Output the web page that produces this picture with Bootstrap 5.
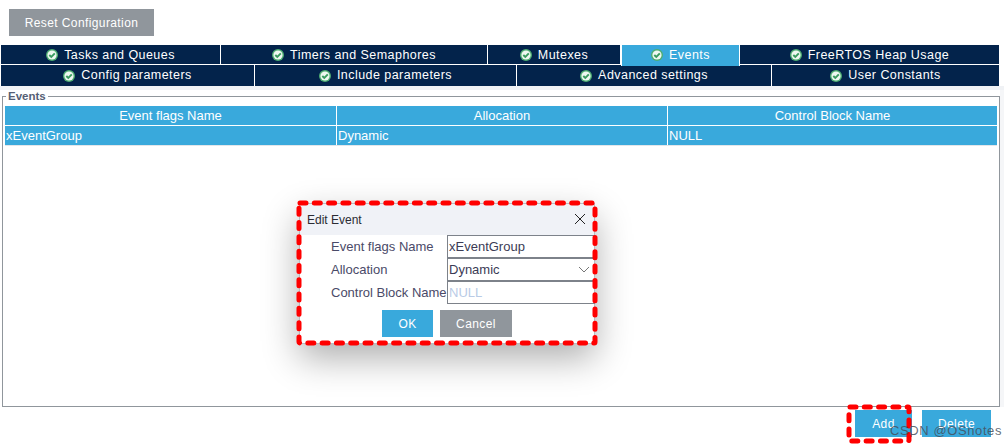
<!DOCTYPE html>
<html lang="en">
<head>
<meta charset="utf-8">
<title>Events</title>
<link href="https://cdn.jsdelivr.net/npm/bootstrap@5.3.0/dist/css/bootstrap.min.css" rel="stylesheet">
<style>
html,body{margin:0;background:#fff;}
body{width:1004px;height:445px;overflow:hidden;position:relative;font-family:"Liberation Sans",Arial,sans-serif;font-size:13px;color:#3b3b55;}
.top-zone{padding:9px 0 0 9px;height:45px;}
.flat-btn{border:0;border-radius:0;color:#fff;font-size:12px;letter-spacing:.4px;padding:0;display:flex;align-items:center;justify-content:center;}
.btn-grey{background:#90969c;}
.btn-blue{background:#39a9dc;}
.reset-btn{width:145px;height:27px;}
.tab-strip{margin-left:1px;width:998px;display:flex;}
.strip-one{height:20px;}
.strip-two{height:21px;}
.tab-cell{background:#03234b;color:#fff;font-size:12.5px;letter-spacing:.45px;display:flex;align-items:center;justify-content:center;gap:6px;border-right:1px solid #fff;white-space:nowrap;}
.tab-cell:last-child{border-right:0;}
.strip-one .tab-cell{height:19px;padding-top:1px;}
.strip-one .tab-cell.tab-on{background:#39a9dc;height:21px;position:relative;z-index:1;padding-bottom:2px;border-left:1px solid #fff;}
.band{height:4px;background:#f0f2f5;}
.frame-wrap{height:317px;padding:6px 0 0 2px;position:relative;border-right:4px solid #f5f6f8;}
.frame-box{border:1px solid #90969c;height:311px;padding:9px 2px 0 2px;}
.frame-title{position:absolute;left:6px;top:0;background:#fff;padding:0 2px;font-size:11.5px;font-weight:700;line-height:12px;color:#565f75;}
.grid-row{display:flex;gap:1px;}
.grid-cell{background:#39a9dc;color:#fff;height:19px;line-height:19px;font-size:13px;padding:0 1px;}
.head-row .grid-cell{text-align:center;}
.data-row{margin-top:1px;border-bottom:1px solid #e3e6ea;}
.foot-row{display:flex;justify-content:flex-end;gap:10px;padding:3px 13px 0 0;}
.foot-btn{height:27px;}
.add-btn{width:57px;}
.del-btn{width:69px;}
.dialog{position:absolute;left:299px;top:203px;width:296px;height:141px;background:#fff;border:1px solid #b9bcc2;box-shadow:0 14px 34px rgba(0,0,0,.32);}
.dialog-head{height:31px;background:#f0f2f7;display:flex;align-items:center;justify-content:space-between;padding:0 8px 0 7px;font-size:12px;color:#2b2b33;}
.dialog-close{margin-bottom:2px;}
.dialog-form{display:grid;grid-template-columns:147px 148px;row-gap:0;}
.dialog-label{height:23px;line-height:23px;text-align:left;padding-left:31px;white-space:nowrap;font-size:13px;color:#4a4a68;}
.dialog-field{height:23px;border:1px solid #7d828a;border-right:0;line-height:21px;padding:0 1px;font-size:13px;color:#3b3b55;display:flex;justify-content:space-between;align-items:center;}
.ghost{color:#b9cbe6;}
.dialog-actions{display:flex;justify-content:center;gap:7px;margin-top:6px;}
.act-ok{width:51px;height:27px;}
.act-cancel{width:72px;height:27px;}
.mark-line{position:absolute;overflow:visible;pointer-events:none;z-index:5;}
.watermark{position:absolute;left:890px;top:421px;font-size:13px;color:rgba(70,80,92,.85);letter-spacing:.6px;z-index:6;white-space:nowrap;}
</style>
</head>
<body>
<svg width="0" height="0" class="position-absolute"><defs>
<g id="okmark"><circle cx="6" cy="6" r="6" fill="#4fae73"/><circle cx="6" cy="6" r="4.6" fill="#eef8f1"/><path d="M3.3 6 5.3 8 8.8 4.3" fill="none" stroke="#3a9c60" stroke-width="1.9"/></g>
</defs></svg>

<div class="top-zone"><button class="flat-btn btn-grey reset-btn">Reset Configuration</button></div>

<div class="tab-strip strip-one">
  <div class="tab-cell" style="width:220px"><svg width="12" height="12"><use href="#okmark"/></svg>Tasks and Queues</div>
  <div class="tab-cell" style="width:267px"><svg width="12" height="12"><use href="#okmark"/></svg>Timers and Semaphores</div>
  <div class="tab-cell" style="width:133px"><svg width="12" height="12"><use href="#okmark"/></svg>Mutexes</div>
  <div class="tab-cell tab-on" style="width:119px"><svg width="12" height="12"><use href="#okmark"/></svg>Events</div>
  <div class="tab-cell" style="width:259px"><svg width="12" height="12"><use href="#okmark"/></svg>FreeRTOS Heap Usage</div>
</div>
<div class="tab-strip strip-two">
  <div class="tab-cell" style="width:254px"><svg width="12" height="12"><use href="#okmark"/></svg>Config parameters</div>
  <div class="tab-cell" style="width:262px"><svg width="12" height="12"><use href="#okmark"/></svg>Include parameters</div>
  <div class="tab-cell" style="width:255px"><svg width="12" height="12"><use href="#okmark"/></svg>Advanced settings</div>
  <div class="tab-cell" style="width:227px"><svg width="12" height="12"><use href="#okmark"/></svg>User Constants</div>
</div>
<div class="band"></div>

<div class="frame-wrap">
  <div class="frame-title">Events</div>
  <div class="frame-box">
    <div class="grid-row head-row">
      <div class="grid-cell" style="width:331px">Event flags Name</div>
      <div class="grid-cell" style="width:330px">Allocation</div>
      <div class="grid-cell" style="width:329px">Control Block Name</div>
    </div>
    <div class="grid-row data-row">
      <div class="grid-cell" style="width:331px">xEventGroup</div>
      <div class="grid-cell" style="width:330px">Dynamic</div>
      <div class="grid-cell" style="width:329px">NULL</div>
    </div>
  </div>
</div>
<div class="foot-row">
  <button class="flat-btn btn-blue foot-btn add-btn">Add</button>
  <button class="flat-btn btn-blue foot-btn del-btn">Delete</button>
</div>

<div class="dialog">
  <div class="dialog-head"><span>Edit Event</span>
    <svg class="dialog-close" width="12" height="12" viewBox="0 0 12 12"><path d="M1 1 11 11M11 1 1 11" stroke="#222" stroke-width="1" fill="none"/></svg></div>
  <div class="dialog-form">
    <div class="dialog-label">Event flags Name</div><div class="dialog-field">xEventGroup</div>
    <div class="dialog-label">Allocation</div><div class="dialog-field"><span>Dynamic</span><svg width="12" height="7" viewBox="0 0 12 7" class="me-1"><path d="M1 1 6 6 11 1" stroke="#777" fill="none"/></svg></div>
    <div class="dialog-label">Control Block Name</div><div class="dialog-field ghost">NULL</div>
  </div>
  <div class="dialog-actions">
    <button class="flat-btn btn-blue act-ok">OK</button>
    <button class="flat-btn btn-grey act-cancel">Cancel</button>
  </div>
</div>

<svg class="mark-line" style="left:0;top:0" width="1004" height="445">
  <rect x="299" y="203" width="296" height="140" rx="1" fill="none" stroke="#ff0000" stroke-width="5" stroke-linecap="round" stroke-dasharray="6 8.3"/>
  <rect x="849" y="407" width="60" height="34" rx="1" fill="none" stroke="#ff0000" stroke-width="5" stroke-linecap="round" stroke-dasharray="6 8.3"/>
</svg>
<div class="watermark">CSDN @OSnotes</div>
<script src="https://cdn.jsdelivr.net/npm/bootstrap@5.3.0/dist/js/bootstrap.bundle.min.js"></script>
</body>
</html>
